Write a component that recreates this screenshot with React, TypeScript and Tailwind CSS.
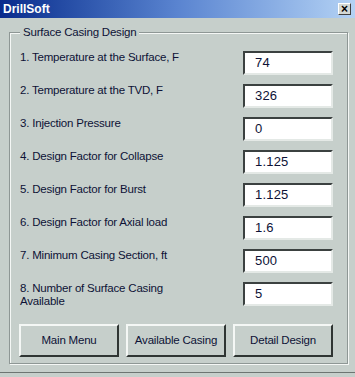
import React from 'react';

const fields: { label: string; value: string }[] = [
  { label: '1. Temperature at the Surface, F', value: '74' },
  { label: '2. Temperature at the TVD, F', value: '326' },
  { label: '3. Injection Pressure', value: '0' },
  { label: '4. Design Factor for Collapse', value: '1.125' },
  { label: '5. Design Factor for Burst', value: '1.125' },
  { label: '6. Design Factor for Axial load', value: '1.6' },
  { label: '7. Minimum Casing Section, ft', value: '500' },
  { label: '8. Number of Surface Casing Available', value: '5' },
];

const buttons = ['Main Menu', 'Available Casing', 'Detail Design'];

export default function App() {
  return (
    <div className="w-[355px] h-[377px] bg-[#c6cfcb] font-['Liberation_Sans',Arial,sans-serif] text-[#0d1236] overflow-hidden">
      {/* Title bar */}
      <div className="h-[18px] flex items-center justify-between pl-[3px] pr-[4px] bg-gradient-to-r from-[#0a2a8c] via-[#5a84d0] to-[#b4d2f4]">
        <span className="text-white font-bold text-[12px] leading-none">DrillSoft</span>
        <button className="w-[13px] h-[12px] flex items-center justify-center bg-[#d4d8d4] border border-t-white border-l-white border-r-[#404040] border-b-[#404040] text-black font-bold text-[12px] leading-none">
          ×
        </button>
      </div>

      {/* Body */}
      <div className="pt-[8px] pl-[9px] pr-[8px] pb-[8px] border-b border-[#6d7572]">
        <fieldset className="pl-[10px] pr-[14px] pb-[6px] border border-[#8e9795] shadow-[1px_1px_0_#f4f7f5,inset_1px_1px_0_#f4f7f5]">
          <legend className="px-[3px] text-[11.5px] leading-[13px] tracking-[-0.2px] bg-[#c6cfcb]">Surface Casing Design</legend>

          <div className="mt-[12px] flex flex-col gap-[9px]">
            {fields.map((f) => (
              <div key={f.label} className="flex items-start justify-between">
                <span className="w-[175px] text-[11.5px] leading-[13px] tracking-[-0.2px]">{f.label}</span>
                <div className="w-[90px] h-[24px] bg-white border-2 border-t-[#3b4140] border-l-[#3b4140] border-r-[#e4e9e6] border-b-[#e4e9e6] flex items-center pl-[10px] text-[13px] tracking-[0.2px]">
                  {f.value}
                </div>
              </div>
            ))}
          </div>

          <div className="mt-[16px] -ml-px flex gap-[7px]">
            {buttons.map((b) => (
              <button
                key={b}
                className="w-[100px] h-[33px] bg-[#c6cfcb] border-2 border-t-[#f4f7f5] border-l-[#f4f7f5] border-r-[#2f3533] border-b-[#2f3533] text-[11.5px] tracking-[-0.2px] text-[#0d1236]"
              >
                {b}
              </button>
            ))}
          </div>
        </fieldset>
      </div>
    </div>
  );
}
